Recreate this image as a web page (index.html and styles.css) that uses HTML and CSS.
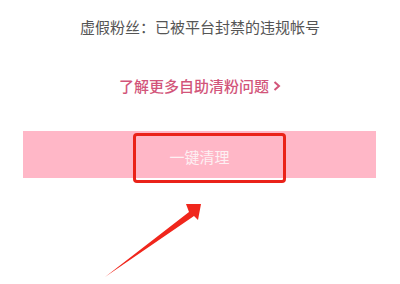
FILE: index.html
```html
<!DOCTYPE html>
<html>
<head>
<meta name="viewport" content="width=device-width, initial-scale=1">
<link rel="stylesheet" href="styles.css">
</head>
<body>

<div class="page">
  <p class="fake-note">虚假粉丝：已被平台封禁的违规帐号</p>

  <a class="more-link" href="#">了解更多自助清粉问题<svg class="chev" width="8" height="10" viewBox="0 0 8 10"><path d="M1.5 1 L6 5 L1.5 9" fill="none" stroke="#d2557a" stroke-width="2"/></svg></a>

  <div class="clean-bar">
    <span class="clean-text">一键清理</span>
    <div class="mark"></div>
  </div>

  <!-- annotation arrow -->
  <svg class="pointer" width="400" height="284" viewBox="0 0 400 284">
    <polygon points="105,277 189,212 186,204 201,204 198,220 194,216" fill="#f0261c"/>
  </svg>
</div>

</body>
</html>
```

FILE: styles.css
```css
body {
  margin: 0;
  background: #fff;
  font-family: "Noto Sans CJK SC", "Noto Sans", sans-serif;
}

.page {
  position: relative;
  width: 400px;
  height: 284px;
  display: flex;
  flex-direction: column;
  align-items: center;
  overflow: hidden;
}

.fake-note {
  margin: 17px 0 0 0;
  font-size: 15px;
  line-height: 20px;
  color: #555;
}

.more-link {
  margin-top: 39px;
  display: flex;
  align-items: center;
  gap: 4px;
  font-size: 15px;
  line-height: 20px;
  font-weight: 500;
  color: #d2557a;
  text-decoration: none;
}

.clean-bar {
  position: relative;
  margin-top: 35px;
  width: 353px;
  height: 47px;
  margin-left: -1px;
  background: #ffb7c7;
  display: flex;
  align-items: center;
  justify-content: center;
}

.clean-text {
  padding-top: 3px;
  font-size: 15px;
  color: #fdf0f3;
}

/* red highlight box */
.mark {
  position: absolute;
  left: 110px;
  top: 2px;
  width: 147px;
  height: 44px;
  border: 3px solid #ea2219;
  border-radius: 4px;
}

.pointer {
  position: absolute;
  left: 0;
  top: 0;
}
```
